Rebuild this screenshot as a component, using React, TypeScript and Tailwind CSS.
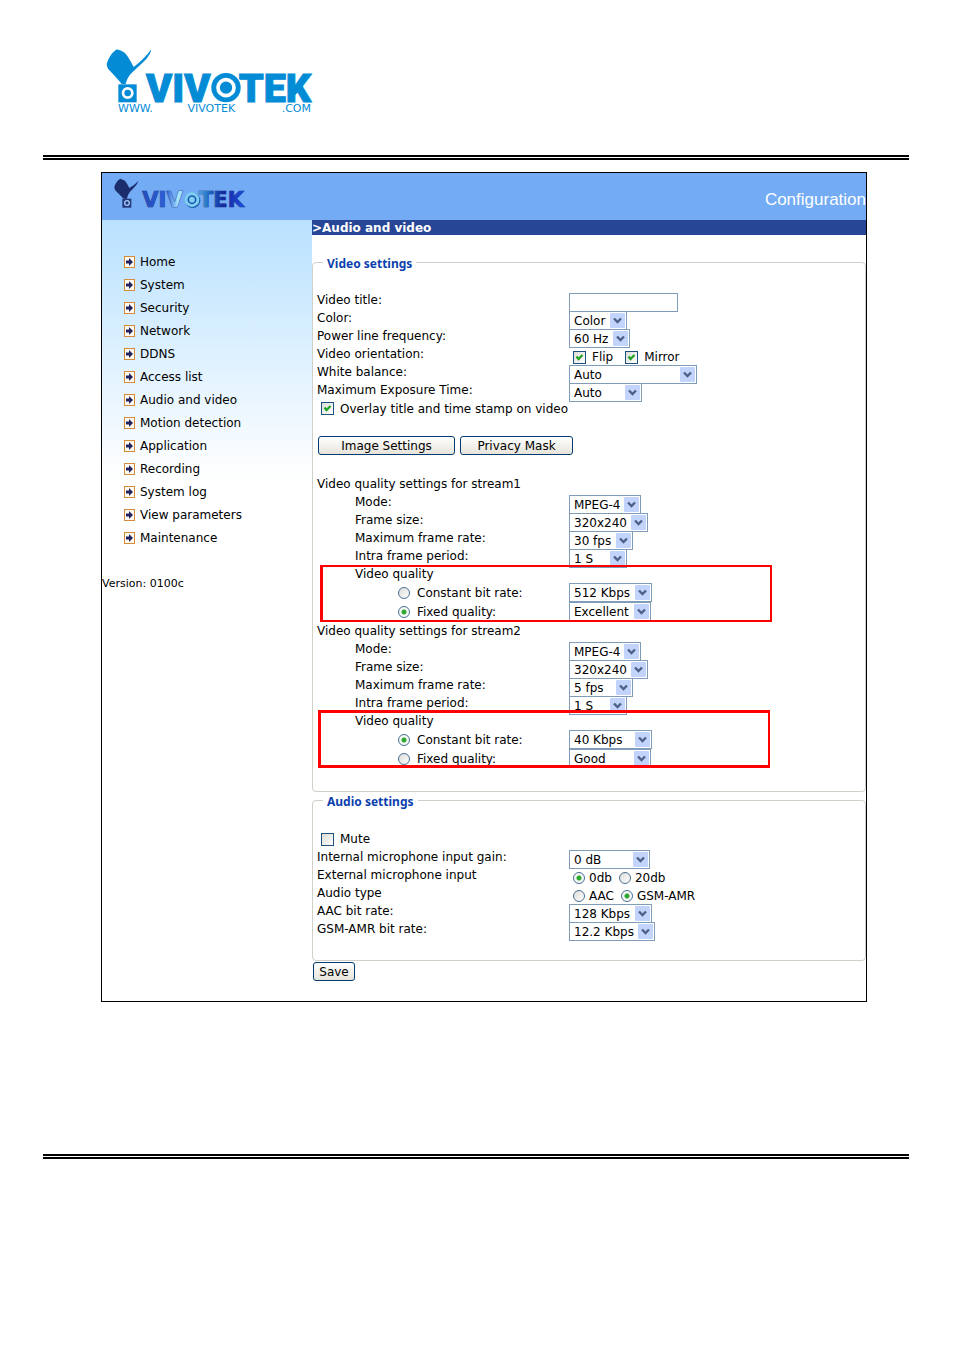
import React, { useId } from 'react';

const NAV_ITEMS = [
    'Home',
    'System',
    'Security',
    'Network',
    'DDNS',
    'Access list',
    'Audio and video',
    'Motion detection',
    'Application',
    'Recording',
    'System log',
    'View parameters',
    'Maintenance',
];

const BrandLogo: React.FC = () => (
    <svg width="208" height="70" viewBox="48 24 624 210" role="img" aria-label="VIVOTEK" fill="#048bd6">
        <path d="M50 72 Q58 44 78 29 Q84 26 104 38 Q112 44 131 81 Q162 58 184 28 Q182 46 160 66 L124 100 Q112 112 107 132 L95 132 Q90 124 54 86 Q50 80 50 72 Z" />
        <path d="M85 133 H140 V187 H85 Z" />
        <circle cx="113" cy="159" r="14" fill="none" stroke="#fff" strokeWidth="8" />
        <g fontFamily="Roboto, 'Liberation Sans', sans-serif" fontWeight="900" fontSize="119" stroke="#048bd6" strokeWidth="3">
            <text x="168" y="185">VIV</text>
            <text x="446" y="185">TEK</text>
        </g>
        <circle cx="408" cy="143" r="47" fill="#fff" />
        <circle cx="408" cy="143" r="44" />
        <circle cx="408" cy="143" r="24" fill="none" stroke="#fff" strokeWidth="11" />
        <g fontFamily="'DejaVu Sans', sans-serif" fontSize="33">
            <text x="84" y="216">WWW.</text>
            <text x="364" y="216" textAnchor="middle">VIVOTEK</text>
            <text x="663" y="216" textAnchor="end">.COM</text>
        </g>
    </svg>
);

const HeaderLogo: React.FC = () => (
    <svg width="134" height="39" viewBox="54 33 402 117" role="img" aria-label="VIVOTEK">
        <defs>
            <linearGradient id="metal" gradientUnits="userSpaceOnUse" x1="138" y1="0" x2="448" y2="0">
                <stop offset="0" stopColor="#2449b8" />
                <stop offset="0.25" stopColor="#2b62d8" />
                <stop offset="0.36" stopColor="#a9e6ff" />
                <stop offset="0.5" stopColor="#6cc4f4" />
                <stop offset="0.66" stopColor="#1c6cc0" />
                <stop offset="0.8" stopColor="#1626a0" />
                <stop offset="1" stopColor="#1c50e0" />
            </linearGradient>
        </defs>
        <path d="M58 64 Q62 46 76 38 L90 44 Q96 52 103 66 Q118 58 130 45 Q128 54 114 68 Q98 82 96 98 L86 98 L60 72 Z" fill="#1c2d6e" />
        <path d="M82 98 H109 V125 H82 Z" fill="#24387c" />
        <circle cx="96" cy="111" r="7" fill="none" stroke="#a8c8f8" strokeWidth="4" />
        <g fontFamily="'DejaVu Sans', sans-serif" fontWeight="700" fontSize="63">
            <g fill="url(#metal)" stroke="#14246c" strokeWidth="2" paintOrder="stroke">
                <text x="142" y="124">VIV</text>
                <text x="312" y="124">TEK</text>
            </g>
        </g>
        <circle cx="293" cy="103" r="23" fill="#1c58a8" />
        <circle cx="291" cy="101" r="22" fill="#7fd0f4" />
        <circle cx="291" cy="101" r="11" fill="none" stroke="#1c58a8" strokeWidth="5" />
    </svg>
);

const ArrowIcon: React.FC = () => (
    <svg width="11" height="12" viewBox="0 0 11 12" aria-hidden="true">
        <rect x="0.5" y="0.5" width="10" height="11" fill="#fffaf0" stroke="#d58a3c" />
        <path d="M2 4.5 H5 V2 L9 6 L5 10 V7.5 H2 Z" fill="#23235f" />
    </svg>
);

const DoubleRule: React.FC = () => <div className="h-[5px] border-y-2 border-black" />;

interface SelectProps {
    id: string;
    value: string;
    className: string;
    label?: string;
}

const Select: React.FC<SelectProps> = ({ id, value, className, label }) => (
    <span className={`relative block h-[19px] shrink-0 ${className}`}>
        <select id={id} aria-label={label} defaultValue={value} className="block h-full w-full appearance-none border border-[#7f9db9] bg-white pl-1 text-xs leading-4">
            <option>{value}</option>
        </select>
        <svg width="15" height="15" viewBox="0 0 15 15" aria-hidden="true" className="pointer-events-none absolute top-0.5 right-0.5">
            <rect width="15" height="15" rx="1" fill="#c2d4fb" />
            <path d="M4 5.5 L7.5 9 L11 5.5" fill="none" stroke="#4d6185" strokeWidth="2.4" />
        </svg>
    </span>
);

interface CheckProps {
    label: string;
    checked?: boolean;
}

const Check: React.FC<CheckProps> = ({ label, checked }) => (
    <label className="flex items-center gap-1.5">
        <span className="relative block size-[13px]">
            <input type="checkbox" defaultChecked={checked} className="peer block size-[13px] appearance-none border border-[#1c5180] bg-linear-to-br from-[#dcdcd7] to-white" />
            <svg width="13" height="13" viewBox="0 0 13 13" aria-hidden="true" className="pointer-events-none absolute inset-0 hidden peer-checked:block">
                <path d="M3.5 5.5 L5.5 8 L9.5 4" fill="none" stroke="#21a121" strokeWidth="2.2" />
            </svg>
        </span>
        {label}
    </label>
);

interface RadioProps extends CheckProps {
    name: string;
    className: string;
}

const Radio: React.FC<RadioProps> = ({ label, name, checked, className }) => (
    <label className={`flex items-center ${className}`}>
        <input
            type="radio"
            name={name}
            defaultChecked={checked}
            className="block size-3 shrink-0 appearance-none rounded-full border border-[#4a6f96] bg-linear-to-br from-[#dcdcd7] to-white checked:bg-[radial-gradient(circle,#2fa82f_0,#2fa82f_2px,#f4f6f4_3px)]"
        />
        {label}
    </label>
);

const PushButton: React.FC<{ className: string; children: React.ReactNode }> = ({ className, children }) => (
    <button type="button" className={`h-[19px] rounded-[3px] border border-[#003c74] bg-linear-to-b from-white to-[#e6e4da] text-xs leading-4 ${className}`}>
        {children}
    </button>
);

interface FieldProps {
    label: string;
    indent?: boolean;
    value?: string;
    width?: string;
}

const Field: React.FC<FieldProps> = ({ label, indent, value, width }) => {
    const id = useId();
    return (
        <div className="flex h-[18px] items-start">
            <label htmlFor={id} className={`w-[252px] shrink-0 ${indent ? 'pl-[38px]' : ''}`}>{label}</label>
            <div className="pt-0.5">
                {value ? (
                    <Select id={id} value={value} className={width ?? ''} />
                ) : (
                    <input id={id} type="text" className="block h-[19px] w-[109px] border border-[#7f9db9] bg-white px-1" />
                )}
            </div>
        </div>
    );
};

const ChoiceField: React.FC<{ label: string; className: string; children: React.ReactNode }> = ({ label, className, children }) => (
    <div role="group" aria-label={label} className="flex h-[18px] items-start">
        <span className="w-[252px] shrink-0">{label}</span>
        <div className={`flex pt-[3px] pl-1 ${className}`}>{children}</div>
    </div>
);

interface StreamProps {
    index: number;
    fps: string;
    bitRate: string;
    quality: string;
    constant: boolean;
    highlight: string;
}

const StreamSettings: React.FC<StreamProps> = ({ index, fps, bitRate, quality, constant, highlight }) => {
    const name = `stream${index}-quality`;
    return (
        <section className="pb-px">
            <h3>Video quality settings for stream{index}</h3>
            <Field indent label="Mode:" value="MPEG-4" width="w-[72px]" />
            <Field indent label="Frame size:" value="320x240" width="w-[79px]" />
            <Field indent label="Maximum frame rate:" value={fps} width="w-[64px]" />
            <Field indent label="Intra frame period:" value="1 S" width="w-[58px]" />
            <div className="relative">
                <p className="pl-[38px]">Video quality</p>
                <div className="flex h-[19px] items-center">
                    <Radio name={name} checked={constant} label="Constant bit rate:" className="w-[252px] shrink-0 gap-[7px] pl-[81px]" />
                    <Select id={`${name}-rate`} label="Constant bit rate" value={bitRate} className="w-[83px]" />
                </div>
                <div className="flex h-[19px] items-center">
                    <Radio name={name} checked={!constant} label="Fixed quality:" className="w-[252px] shrink-0 gap-[7px] pl-[81px]" />
                    <Select id={`${name}-level`} label="Fixed quality" value={quality} className="w-[82px]" />
                </div>
                <div className={`pointer-events-none absolute w-[452px] border-[#f00] ${highlight}`} />
            </div>
        </section>
    );
};

const Panel: React.FC<{ title: string; className: string; children: React.ReactNode }> = ({ title, className, children }) => (
    <fieldset className={`rounded-[4px] border border-[#d0d0c8] px-1 ${className}`}>
        <legend className="ml-1.5 h-4 px-1 font-['Noto_Sans',sans-serif] font-bold leading-5 text-[#0b3fae]">{title}</legend>
        {children}
    </fieldset>
);

const App: React.FC = () => {
    return (
        <div className="bg-white pt-12 pr-[45px] pb-[190px] pl-[43px] font-['DejaVu_Sans',Verdana,sans-serif] text-xs leading-[18px] text-black">
            <header className="h-[107px] pl-[63px]">
                <BrandLogo />
            </header>
            <DoubleRule />

            <div className="mt-3 mr-[42px] mb-[152px] ml-[58px] border border-black">
                <div className="flex h-[47px] items-start justify-between bg-[#73abf4]">
                    <div className="pt-1 pl-[11px]">
                        <HeaderLogo />
                    </div>
                    <h1 className="pt-[17px] font-['Liberation_Sans',Arial,sans-serif] text-[17px] leading-5 text-white">Configuration</h1>
                </div>

                <div className="flex">
                    <aside className="w-[210px] shrink-0 bg-linear-to-b from-[#b9e1ff] to-white to-[260px] pt-[30px]">
                        <nav className="pl-[22px]">
                            {NAV_ITEMS.map((item) => (
                                <a key={item} href="#" className="flex h-[23px] items-center gap-[5px]">
                                    <ArrowIcon />
                                    {item}
                                </a>
                            ))}
                        </nav>
                        <p className="mt-[26px] text-[11px]">Version: 0100c</p>
                    </aside>

                    <main className="min-w-0 flex-1 pb-5">
                        <h2 className="h-[15px] bg-[#274696] text-xs leading-4 font-bold text-white">&gt;Audio and video</h2>

                        <Panel title="Video settings" className="mt-[19px] pt-[21px] pb-[22px]">
                            <Field label="Video title:" />
                            <Field label="Color:" value="Color" width="w-[58px]" />
                            <Field label="Power line frequency:" value="60 Hz" width="w-[61px]" />
                            <ChoiceField label="Video orientation:" className="gap-3">
                                <Check label="Flip" checked />
                                <Check label="Mirror" checked />
                            </ChoiceField>
                            <Field label="White balance:" value="Auto" width="w-[128px]" />
                            <Field label="Maximum Exposure Time:" value="Auto" width="w-[73px]" />
                            <div className="flex h-[19px] items-center pl-1">
                                <Check label="Overlay title and time stamp on video" checked />
                            </div>

                            <div className="mt-[18px] mb-5 flex gap-[5px] pl-px">
                                <PushButton className="w-[137px]">Image Settings</PushButton>
                                <PushButton className="w-[113px]">Privacy Mask</PushButton>
                            </div>

                            <StreamSettings index={1} fps="30 fps" bitRate="512 Kbps" quality="Excellent" constant={false} highlight="top-0 left-[3px] h-[57px] border-2 border-l-3" />
                            <StreamSettings index={2} fps="5 fps" bitRate="40 Kbps" quality="Good" constant highlight="-top-0.5 left-px h-[58px] border-3 border-r-2" />
                        </Panel>

                        <Panel title="Audio settings" className="pt-[22px] pb-[22px]">
                            <div className="flex h-[18px] items-center pl-1">
                                <Check label="Mute" />
                            </div>
                            <Field label="Internal microphone input gain:" value="0 dB" width="w-[81px]" />
                            <ChoiceField label="External microphone input" className="gap-[7px]">
                                <Radio name="external-gain" label="0db" checked className="gap-1" />
                                <Radio name="external-gain" label="20db" className="gap-1" />
                            </ChoiceField>
                            <ChoiceField label="Audio type" className="gap-[7px]">
                                <Radio name="audio-type" label="AAC" className="gap-1" />
                                <Radio name="audio-type" label="GSM-AMR" checked className="gap-1" />
                            </ChoiceField>
                            <Field label="AAC bit rate:" value="128 Kbps" width="w-[83px]" />
                            <Field label="GSM-AMR bit rate:" value="12.2 Kbps" width="w-[86px]" />
                        </Panel>
                        <PushButton className="mt-px ml-px block w-[42px]">Save</PushButton>
                    </main>
                </div>
            </div>

            <DoubleRule />
        </div>
    );
};

export default App;
